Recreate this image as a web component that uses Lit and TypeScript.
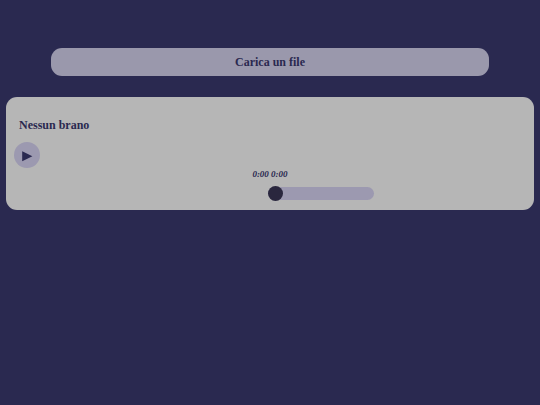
import { LitElement, html, css } from "lit";
import { customElement, state } from "lit/decorators.js";

@customElement("app-root")
export class AppRoot extends LitElement {
  static styles = css`
    :host {
      display: block;
      box-sizing: border-box;
      min-height: 100vh;
      padding: 48px 6px 24px;
      background: #2a2950;
      color: #2a2950;
      font-family: "Liberation Serif", "Times New Roman", serif;
      font-size: 12px;
      line-height: 16px;
    }
    .upload {
      display: block;
      width: 83%;
      height: 28px;
      margin: 0 auto 21px;
      padding: 0;
      border: 0;
      border-radius: 11px;
      background: #9a98ac;
      color: inherit;
      font: inherit;
      font-weight: bold;
      cursor: pointer;
    }
    .player {
      display: flex;
      flex-direction: column;
      padding: 20px 8px 9px;
      border-radius: 11px;
      background: #b6b6b6;
    }
    .title {
      margin: 0 5px 9px;
      font-size: 12px;
      font-weight: bold;
    }
    .play {
      display: flex;
      align-items: center;
      justify-content: center;
      width: 26px;
      height: 26px;
      padding: 0;
      border: 0;
      border-radius: 50%;
      background: #9c99b0;
      color: inherit;
      cursor: pointer;
    }
    .icon {
      width: 12px;
      height: 14px;
      fill: currentColor;
    }
    .time {
      margin: 0;
      font-size: 9px;
      line-height: 12px;
      font-weight: bold;
      font-style: italic;
      text-align: center;
    }
    .track {
      display: grid;
      grid-template-columns: 1fr 1fr;
      margin-top: 5px;
      padding-right: 4px;
    }
    .seek {
      grid-column: 2;
      appearance: none;
      width: 106px;
      height: 13px;
      margin: 2px 0 1px;
      border-radius: 7px;
      background: #9c99b0;
      cursor: pointer;
    }
    .seek::-webkit-slider-thumb {
      appearance: none;
      width: 15px;
      height: 15px;
      border-radius: 50%;
      background: #2a273e;
    }
    .seek::-moz-range-thumb {
      width: 15px;
      height: 15px;
      border: 0;
      border-radius: 50%;
      background: #2a273e;
    }
  `;

  @state() private position = 0;

  private seek(event: Event) {
    this.position = Number((event.target as HTMLInputElement).value);
  }

  render() {
    return html`
      <button class="upload" type="button">Carica un file</button>
      <section class="player">
        <h1 class="title">Nessun brano</h1>
        <button class="play" type="button" aria-label="Riproduci">
          <svg class="icon" viewBox="0 0 12 14" aria-hidden="true">
            <path d="M1.2 3.2 11.4 8.3 1.2 13.3z" />
          </svg>
        </button>
        <p class="time">0:00 0:00</p>
        <div class="track">
          <input
            class="seek"
            type="range"
            min="0"
            max="100"
            aria-label="Posizione"
            .value=${String(this.position)}
            @input=${this.seek}
          />
        </div>
      </section>
    `;
  }
}
